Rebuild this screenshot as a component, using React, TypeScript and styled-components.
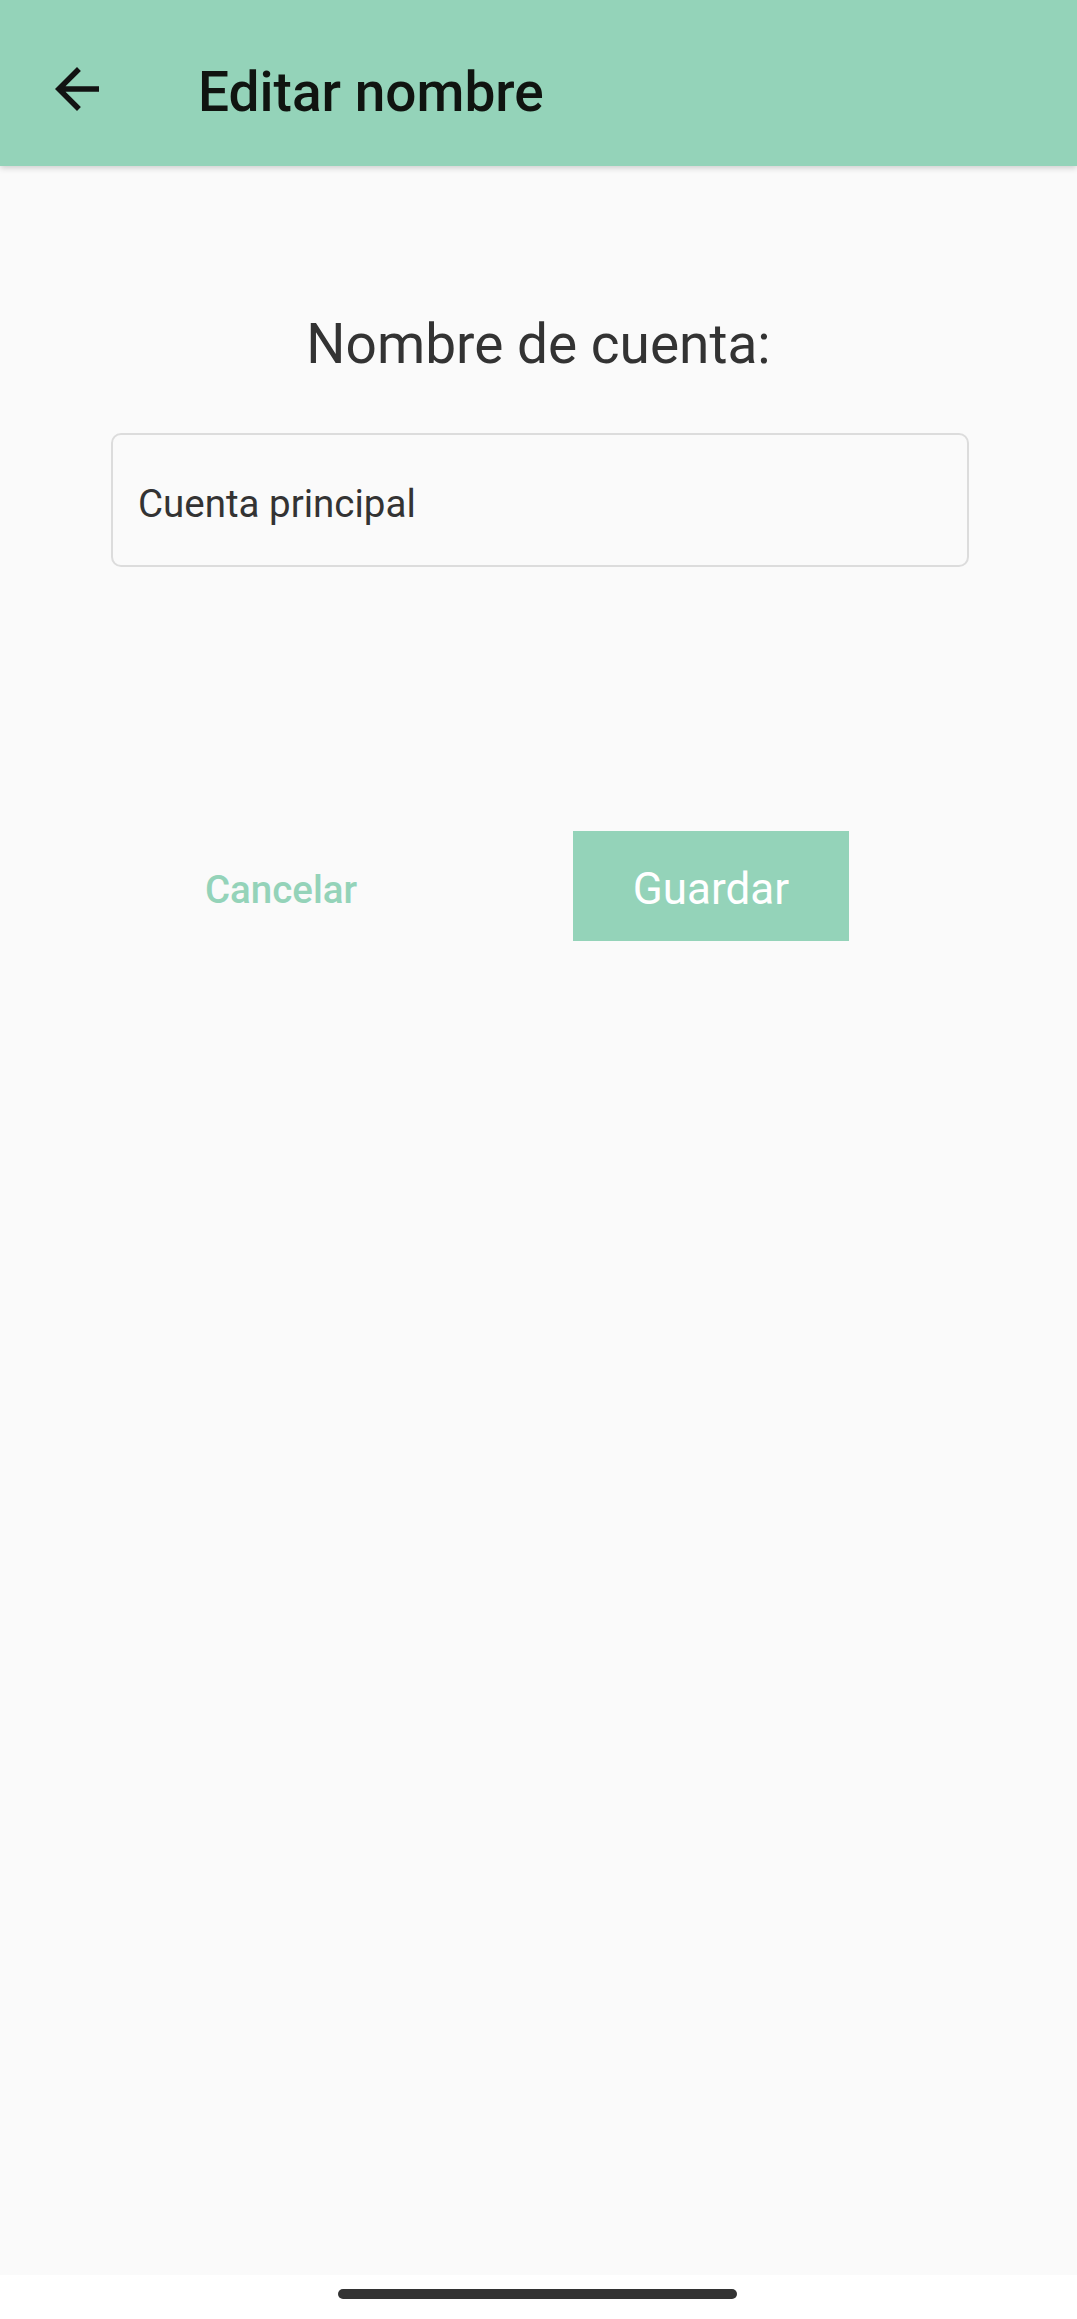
import React from "react";
import styled, { createGlobalStyle } from "styled-components";

const GlobalStyle = createGlobalStyle`
  html, body {
    margin: 0;
    padding: 0;
    background: #fafafa;
  }
  body {
    font-family: Roboto, "Noto Sans", "Liberation Sans", sans-serif;
  }
  * { box-sizing: border-box; }
`;

const Screen = styled.div`
  display: flex;
  flex-direction: column;
  min-height: 100vh;
  background: #fafafa;
`;

const AppBar = styled.header`
  position: relative;
  z-index: 2;
  display: flex;
  align-items: flex-start;
  height: 166px;
  background: #94d3b9;
  box-shadow: 0 2px 6px rgba(0, 0, 0, 0.18);
`;

const BackButton = styled.button`
  display: flex;
  align-items: center;
  justify-content: center;
  width: 66px;
  height: 66px;
  margin: 56px 0 0 44px;
  padding: 0;
  border: none;
  background: transparent;
  color: #121212;
  cursor: pointer;
`;

const BarTitle = styled.h1`
  margin: 60px 0 0 88px;
  font-family: Roboto, sans-serif;
  font-size: 55px;
  line-height: 64px;
  font-weight: 500;
  color: #101410;
  letter-spacing: 0;
`;

const Content = styled.main`
  flex: 1;
  display: flex;
  flex-direction: column;
  align-items: stretch;
`;

const FieldLabel = styled.h2`
  margin: 146px 0 0;
  text-align: center;
  font-family: Roboto, sans-serif;
  font-size: 55px;
  line-height: 64px;
  font-weight: 400;
  color: #333333;
`;

const NameInput = styled.input`
  display: block;
  width: 858px;
  height: 134px;
  margin: 57px 0 0 111px;
  padding: 6px 25px 0;
  border: 2px solid #dcdcdc;
  border-radius: 10px;
  background: #fafafa;
  font-family: Roboto, sans-serif;
  font-size: 38.5px;
  color: #333333;
  outline: none;
`;

const Actions = styled.div`
  display: flex;
  gap: 154px;
  margin: 264px 0 0;
  padding-left: 143px;
`;

const ActionButton = styled.button<{ $primary?: boolean }>`
  width: 276px;
  height: 110px;
  padding: 6px 0 0;
  border: none;
  border-radius: 0;
  background: ${(p) => (p.$primary ? "#94d3b9" : "transparent")};
  color: ${(p) => (p.$primary ? "#ffffff" : "#94d3b9")};
  font-family: Roboto, sans-serif;
  font-size: ${(p) => (p.$primary ? "44px" : "38.5px")};
  font-weight: ${(p) => (p.$primary ? 400 : 500)};
  cursor: pointer;
`;

const NavBar = styled.div`
  display: flex;
  justify-content: center;
  align-items: flex-start;
  height: 44px;
  background: #ffffff;
`;

const NavHandle = styled.div`
  width: 399px;
  height: 10px;
  margin: 14px 0 0 -2px;
  border-radius: 5px;
  background: #333333;
`;

const ArrowBack = () => (
  <svg width="66" height="66" viewBox="0 0 24 24" fill="currentColor" aria-hidden="true">
    <path d="M20 11H7.83l5.59-5.59L12 4l-8 8 8 8 1.41-1.41L7.83 13H20v-2z" />
  </svg>
);

export default function App() {
  return (
    <>
      <GlobalStyle />
      <Screen>
        <AppBar>
          <BackButton aria-label="Atrás">
            <ArrowBack />
          </BackButton>
          <BarTitle>Editar nombre</BarTitle>
        </AppBar>
        <Content>
          <FieldLabel>Nombre de cuenta:</FieldLabel>
          <NameInput defaultValue="Cuenta principal" />
          <Actions>
            <ActionButton>Cancelar</ActionButton>
            <ActionButton $primary>Guardar</ActionButton>
          </Actions>
        </Content>
        <NavBar>
          <NavHandle />
        </NavBar>
      </Screen>
    </>
  );
}
